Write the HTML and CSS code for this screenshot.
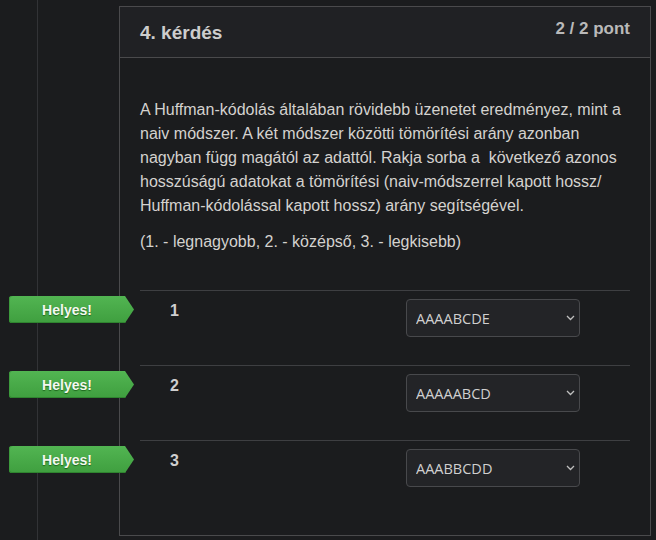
FILE: index.html
```html
<!DOCTYPE html>
<html lang="hu">
<head>
<meta charset="utf-8">
<link rel="stylesheet" href="styles.css">
</head>
<body>
<div class="page">
  <div class="gutter"></div>
  <div class="spacer"></div>
  <section class="card">
    <header class="card-head">
      <h2 class="title">4. kérdés</h2>
      <div class="score">2 / 2 pont</div>
    </header>
    <div class="card-body">
      <p class="text">A Huffman-kódolás általában rövidebb üzenetet eredményez, mint a naiv módszer. A két módszer közötti tömörítési arány azonban nagyban függ magától az adattól. Rakja sorba a&nbsp; következő azonos hosszúságú adatokat a tömörítési (naiv-módszerrel kapott hossz/ Huffman-kódolással kapott hossz) arány segítségével.</p>
      <p class="text note">(1. - legnagyobb, 2. - középső, 3. - legkisebb)</p>
      <div class="rows">
        <div class="row">
          <div class="badge">Helyes!</div>
          <div class="num">1</div>
          <div class="select-wrap">
            <select class="select"><option>AAAABCDE</option></select>
            <svg class="chev" width="9" height="6" viewBox="0 0 9 6"><path d="M1 1 L4.5 4.5 L8 1" fill="none" stroke="#bfbfbf" stroke-width="1.3"/></svg>
          </div>
        </div>
        <div class="row">
          <div class="badge">Helyes!</div>
          <div class="num">2</div>
          <div class="select-wrap">
            <select class="select"><option>AAAAABCD</option></select>
            <svg class="chev" width="9" height="6" viewBox="0 0 9 6"><path d="M1 1 L4.5 4.5 L8 1" fill="none" stroke="#bfbfbf" stroke-width="1.3"/></svg>
          </div>
        </div>
        <div class="row">
          <div class="badge">Helyes!</div>
          <div class="num">3</div>
          <div class="select-wrap">
            <select class="select"><option>AAABBCDD</option></select>
            <svg class="chev" width="9" height="6" viewBox="0 0 9 6"><path d="M1 1 L4.5 4.5 L8 1" fill="none" stroke="#bfbfbf" stroke-width="1.3"/></svg>
          </div>
        </div>
      </div>
    </div>
  </section>
</div>
</body>
</html>
```
FILE: styles.css
```css
html, body {
  margin: 0;
  padding: 0;
  background: #1b1c1e;
  height: 100%;
  overflow: hidden;
}
body {
  font-family: "Liberation Sans", Arial, sans-serif;
  color: #d2d2d2;
}
.page {
  display: flex;
  height: 540px;
}
.gutter {
  width: 37px;
  border-right: 1px solid #323336;
  flex: none;
}
.spacer {
  width: 81px;
  flex: none;
}
.card {
  margin-top: 6px;
  width: 530px;
  height: 528px;
  border: 1px solid #4a4a4c;
  flex: none;
  display: flex;
  flex-direction: column;
}
.card-head {
  background: #202124;
  border-bottom: 1px solid #4a4a4c;
  display: flex;
  align-items: center;
  justify-content: space-between;
  padding: 0 20px;
  box-sizing: border-box;
  height: 51px;
}
.title {
  margin: 0;
  font-size: 19px;
  font-weight: bold;
  color: #cdcdcd;
  padding-top: 2px;
}
.score {
  font-size: 17px;
  font-weight: bold;
  color: #b9b9b9;
  margin-top: -6px;
}
.card-body {
  padding: 40px 20px 0 20px;
}
.text {
  margin: 0;
  font-size: 16px;
  line-height: 24px;
  color: #d4d2cf;
}
.note {
  margin-top: 12px;
}
.rows {
  margin-top: 36px;
}
.row {
  position: relative;
  border-top: 1px solid #3e3f42;
  height: 74px;
  display: grid;
  grid-template-columns: 266px 174px;
  align-items: start;
}
.num {
  padding-top: 10px;
  padding-left: 30px;
  font-size: 16px;
  line-height: 20px;
  font-weight: bold;
  color: #cfcfcf;
}
.select-wrap {
  position: relative;
  margin-top: 8px;
  height: 38px;
}
.select {
  appearance: none;
  -webkit-appearance: none;
  width: 174px;
  height: 38px;
  box-sizing: border-box;
  background: #232427;
  border: 1px solid #48494c;
  border-radius: 4px;
  color: #d0d0d0;
  font-family: "Open Sans", "Noto Sans", sans-serif;
  font-size: 14.5px;
  padding: 0 0 0 9px;
  margin: 0;
}
.chev {
  position: absolute;
  right: 5px;
  top: 16px;
  pointer-events: none;
}
.badge {
  position: absolute;
  left: -131px;
  top: 5px;
  width: 125px;
  height: 27px;
  box-sizing: border-box;
  padding-right: 9px;
  background: linear-gradient(#52b552, #3f9f3f);
  border-radius: 3px 0 0 3px;
  clip-path: polygon(0 0, 116px 0, 125px 50%, 116px 100%, 0 100%);
  display: flex;
  align-items: center;
  justify-content: center;
  color: #f4f8f0;
  font-size: 14px;
  font-weight: bold;
  text-shadow: 0 1px 1px rgba(0, 60, 0, 0.6);
  box-shadow: inset 0 -1px 0 #2f842f, inset 1px 0 0 #3d9a3d;
}
```
